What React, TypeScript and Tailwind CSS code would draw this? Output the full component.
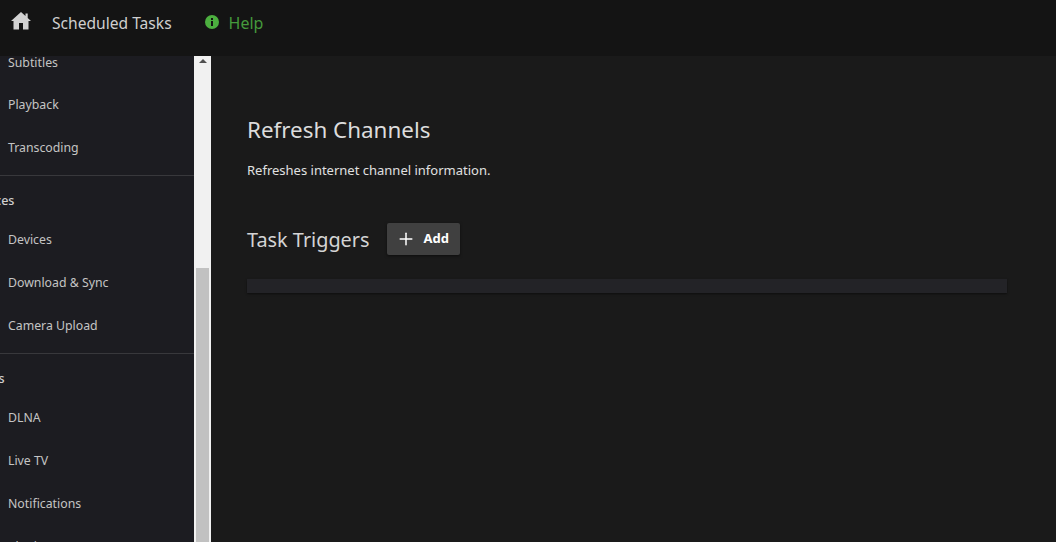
import { Plus } from "lucide-react";

function Item({ label, className = "h-[43px]" }: { label: string; className?: string }) {
  return (
    <div className={`flex items-center pl-2 text-[12.3px] leading-none text-[#c4c4c4] whitespace-nowrap ${className}`}>
      {label}
    </div>
  );
}

function Section({ title, offset, items }: { title: string; offset: string; items: string[] }) {
  return (
    <div className="border-t border-[#38383c]">
      <div className={`h-[43px] pt-[7px] flex items-center text-[12.5px] font-medium leading-none text-[#d0d0d0] whitespace-nowrap ${offset}`}>
        {title}
      </div>
      {items.map((i) => (
        <Item key={i} label={i} />
      ))}
    </div>
  );
}

export default function App() {
  return (
    <div className="w-[1056px] h-[542px] overflow-hidden flex flex-col bg-[#1a1a1a] font-['Noto_Sans','Open_Sans',sans-serif]">
      <header className="h-14 shrink-0 bg-[#141414] flex items-center pb-[10px]">
        <svg viewBox="0 0 20 18" className="w-5 h-[18px] ml-[11px] -mt-1 fill-[#d2d2d2]">
          <path d="M10 0l4.5 4V1.5h2.2v4.6L20 9h-2.5v8.5H12V11H8v6.5H2.5V9H0z" />
        </svg>
        <span className="ml-[21px] mt-[2px] text-[15.6px] text-[#cfcfcf]">Scheduled Tasks</span>
        <span className="ml-[33px] w-[14px] h-[14px] rounded-full bg-[#4caf3f] flex items-center justify-center -mt-[3px]">
          <svg viewBox="0 0 14 14" className="w-[14px] h-[14px] fill-[#141414]">
            <rect x="6" y="6" width="2" height="5" />
            <rect x="6" y="3" width="2" height="2" />
          </svg>
        </span>
        <span className="ml-[10px] text-[16px] text-[#459a3c]">Help</span>
      </header>
      <div className="flex-1 flex min-h-0">
        <aside className="w-[194px] shrink-0 bg-[#1c1c21] overflow-hidden">
          <div className="-mt-[14px]">
            <Item label="Subtitles" className="h-[42px]" />
            <Item label="Playback" />
            <Item label="Transcoding" className="h-[43px] mb-[5px]" />
            <Section title="Devices" offset="-ml-[31px]" items={["Devices", "Download & Sync", "Camera Upload"]} />
            <div className="h-[5px]" />
            <Section title="Services" offset="-ml-[44px]" items={["DLNA", "Live TV", "Notifications", "Plugins"]} />
          </div>
        </aside>
        <div className="w-[17px] shrink-0 bg-[#f1f1f1] flex flex-col items-center">
          <svg viewBox="0 0 8 4" className="w-2 h-1 mt-[3px] fill-[#505050]">
            <path d="M4 0l4 4H0z" />
          </svg>
          <div className="mt-[205px] w-[13px] flex-1 bg-[#c1c1c1]" />
        </div>
        <main className="flex-1 min-w-0 pl-9 pr-[49px]">
          <h1 className="mt-[57px] text-[22.4px] leading-[34px] text-[#dcdcdc]">Refresh Channels</h1>
          <p className="mt-[13px] text-[13px] leading-5 text-[#e0e0e0]">Refreshes internet channel information.</p>
          <div className="mt-[43px] flex items-start">
            <h2 className="text-[19.85px] leading-[34px] text-[#d4d4d4]">Task Triggers</h2>
            <button className="ml-[17px] w-[73px] h-8 rounded-[2px] bg-[#404040] shadow-[0_1px_3px_rgba(0,0,0,0.5)] flex items-center pl-[9px] text-white text-[13px] font-bold">
              <Plus className="w-5 h-5 mr-[8px]" strokeWidth={1.8} />
              Add
            </button>
          </div>
          <div className="mt-[22px] h-[14px] bg-[#232327] shadow-[0_1px_2px_rgba(0,0,0,0.5)]" />
        </main>
      </div>
    </div>
  );
}
